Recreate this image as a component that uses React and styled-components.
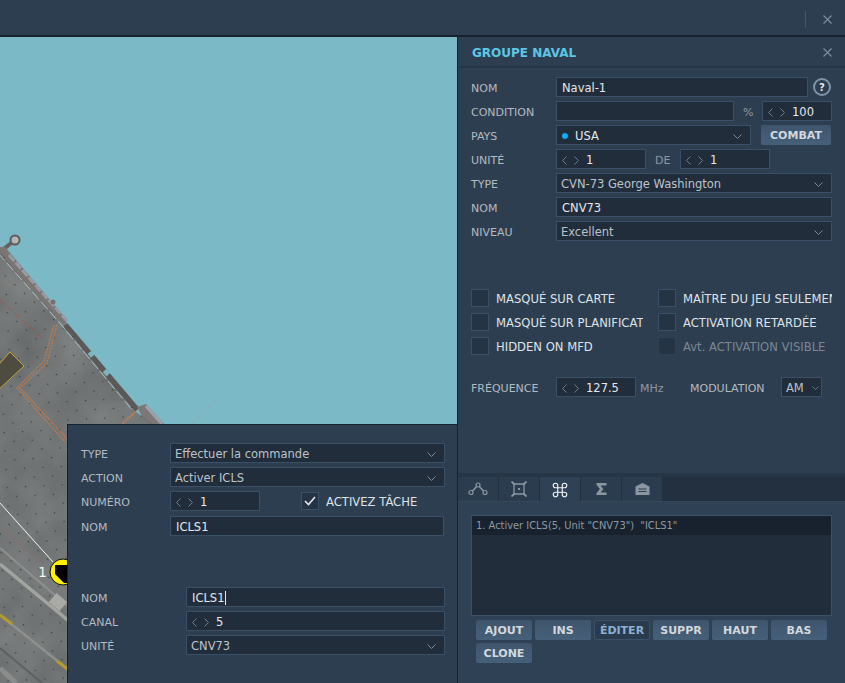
import React from "react";
import styled, { createGlobalStyle } from "styled-components";
import { Command } from "lucide-react";

const GlobalStyle = createGlobalStyle`
  html, body {
    margin: 0;
    padding: 0;
    background: #2d3e50;
  }
  * {
    box-sizing: border-box;
  }
`;

const Page = styled.div`
  width: 845px;
  height: 683px;
  overflow: hidden;
  display: flex;
  flex-direction: column;
  background: #2d3e50;
  font-family: "DejaVu Sans", sans-serif;
  font-size: 11px;
`;

const TopBar = styled.div`
  flex: none;
  height: 37px;
  display: flex;
  align-items: center;
  justify-content: flex-end;
  padding: 3px 13px 0 0;
  border-bottom: 2px solid #18222d;
`;

const TopDivider = styled.div`
  width: 1px;
  height: 17px;
  margin-right: 17px;
  background: #445669;
`;

const CloseIcon = styled.svg`
  display: block;
  width: 9px;
  height: 9px;
  stroke: #7f8f9f;
  stroke-width: 1.1;
  fill: none;
`;

const Body = styled.div`
  flex: 1;
  display: flex;
  min-height: 0;
`;

const MapArea = styled.div`
  position: relative;
  flex: none;
  width: 457px;
  height: 646px;
  overflow: hidden;
  background: #7cb9c7;
`;

const MapSvg = styled.svg`
  display: block;
  width: 457px;
  height: 646px;
`;

const TaskPanel = styled.div`
  position: absolute;
  left: 67px;
  top: 387px;
  right: 0;
  bottom: 0;
  padding: 18px 13px 0 13px;
  background: #2d3e50;
  border-left: 1px solid #18222d;
  border-top: 1px solid #18222d;
  display: flex;
  flex-direction: column;
  gap: 4px;
`;

const SidePanel = styled.div`
  flex: none;
  width: 388px;
  display: flex;
  flex-direction: column;
  border-left: 1px solid #18222d;
`;

const PanelHeader = styled.div`
  flex: none;
  height: 31px;
  display: flex;
  align-items: center;
  justify-content: space-between;
  padding: 2px 13px 0 14px;
  border-bottom: 2px solid #263544;
`;

const Title = styled.div`
  font-size: 12px;
  font-weight: bold;
  color: #5cc6e6;
`;

const Form = styled.div`
  flex: none;
  height: 405px;
  padding: 9px 13px 0 13px;
  display: flex;
  flex-direction: column;
  gap: 4px;
`;

const Row = styled.div`
  display: flex;
  align-items: center;
  height: 20px;
  margin-top: ${(p) => p.$top || 0}px;
`;

const Label = styled.div`
  flex: none;
  width: ${(p) => p.$w || 85}px;
  padding-top: 2px;
  color: #b3bac1;
  white-space: nowrap;
`;

const InlineLabel = styled.div`
  flex: none;
  width: ${(p) => p.$w}px;
  padding: 2px 0 0 ${(p) => p.$pad || 0}px;
  color: ${(p) => p.$color || "#8d98a3"};
  white-space: nowrap;
`;

const Field = styled.div`
  flex: none;
  width: ${(p) => p.$w}px;
  height: 20px;
  display: flex;
  align-items: center;
  padding: 2px 8px 0 5px;
  background: #212d3b;
  border: 1px solid #3a5068;
  color: #e4e8ec;
  font-size: 11.5px;
  white-space: nowrap;
  overflow: hidden;
`;

const TextField = styled(Field)`
  padding-left: 5px;
`;

const Caret = styled.span`
  width: 1px;
  height: 14px;
  margin-left: 1px;
  background: #e4e8ec;
`;

const SelectField = styled(Field)`
  justify-content: space-between;
  padding-left: 4px;
  padding-right: ${(p) => p.$right || 8}px;
  color: #bcc3ca;
`;

const CountryDot = styled.span`
  width: 6px;
  height: 6px;
  margin: 0 7px 0 1px;
  border-radius: 50%;
  background: #0fa9f5;
`;

const SelectValue = styled.span`
  display: flex;
  align-items: center;
  color: ${(p) => p.$color || "inherit"};
`;

const SmallIcon = styled.svg`
  display: block;
  flex: none;
  fill: none;
  stroke: ${(p) => p.$color || "#7e8b98"};
  stroke-width: ${(p) => p.$stroke || 1};
`;

const SpinArrows = styled.span`
  flex: none;
  width: 24px;
  display: flex;
  gap: 7px;
`;

const HelpButton = styled.div`
  flex: none;
  width: 18px;
  height: 18px;
  margin-left: 5px;
  border: 2px solid #7f95aa;
  border-radius: 50%;
  display: flex;
  align-items: center;
  justify-content: center;
  color: #e4e8ec;
  font-size: 10px;
  font-weight: bold;
`;

const Button = styled.div`
  flex: none;
  width: ${(p) => p.$w || 56}px;
  height: 20px;
  margin-left: ${(p) => p.$left || 0}px;
  display: flex;
  align-items: center;
  justify-content: center;
  border-radius: 2px;
  font-size: 11px;
  font-weight: bold;
  color: ${(p) => (p.$ghost ? "#8db0d2" : "#d3d8dd")};
  background: ${(p) =>
    p.$ghost ? "#2a3b4e" : "linear-gradient(#3f556d, #466079)"};
  border: ${(p) => (p.$ghost ? "1px solid #3c5269" : "none")};
`;

const CheckGrid = styled.div`
  margin-top: 44px;
  display: grid;
  grid-template-columns: 187px 174px;
  grid-auto-rows: 18px;
  row-gap: 6px;
`;

const CheckItem = styled.div`
  display: flex;
  align-items: center;
  height: 18px;
  min-width: 0;
  margin-left: ${(p) => p.$left || 0}px;
`;

const CheckBox = styled.div`
  flex: none;
  width: 18px;
  height: 18px;
  display: flex;
  align-items: center;
  justify-content: center;
  background: #253445;
  border: 1px solid ${(p) => (p.$off ? "#2f4154" : "#3a5068")};
`;

const CheckText = styled.div`
  margin-left: 7px;
  padding-top: 2px;
  max-width: ${(p) => p.$max || 149}px;
  overflow: hidden;
  white-space: nowrap;
  font-size: 11.6px;
  color: ${(p) => (p.$off ? "#7b8793" : "#dfe3e7")};
`;

const TabStrip = styled.div`
  flex: none;
  height: 29px;
  padding-top: 4px;
  display: flex;
  gap: 1px;
  align-items: flex-start;
  background: linear-gradient(#263646 0, #263646 4px, #223040 4px);
  border-bottom: 1px solid #34485c;
`;

const Tab = styled.div`
  flex: none;
  width: 40px;
  height: ${(p) => (p.$active ? 25 : 24)}px;
  display: flex;
  align-items: center;
  justify-content: center;
  background: ${(p) => (p.$active ? "#2f4155" : "#2b3c4e")};
  color: ${(p) => (p.$active ? "#f2f4f6" : "#8b96a1")};
`;

const TabBody = styled.div`
  flex: 1;
  padding: 13px 13px 0 13px;
  background: #2f4155;
`;

const ListBox = styled.div`
  height: 101px;
  background: #212d3b;
  border: 1px solid #3a5068;
`;

const ListItem = styled.div`
  height: 19px;
  display: flex;
  align-items: center;
  padding-left: 4px;
  background: #18222e;
  color: #8f99a3;
  font-size: 9.9px;
  white-space: pre;
`;

const ButtonWrap = styled.div`
  width: 355px;
  margin: 4px 0 0 5px;
  display: flex;
  flex-wrap: wrap;
  gap: 3px;
`;

const Close = () => (
  <CloseIcon viewBox="0 0 9 9">
    <path d="M0.5 0.5 8.5 8.5M8.5 0.5 0.5 8.5" />
  </CloseIcon>
);

const Chevron = ({ w = 9 }) => (
  <SmallIcon width={w} height={(w + 1) / 2} viewBox="0 0 9 5">
    <path d="M0.5 0.5 4.5 4.5 8.5 0.5" />
  </SmallIcon>
);

const Select = ({ w, right, chevron, children }) => (
  <SelectField $w={w} $right={right}>
    <SelectValue>{children}</SelectValue>
    <Chevron w={chevron} />
  </SelectField>
);

const Spinner = ({ w, value }) => (
  <Field $w={w}>
    <SpinArrows>
      <SmallIcon width="5" height="9" viewBox="0 0 5 9" $color="#6f7c89">
        <path d="M4.5 0.5 0.5 4.5 4.5 8.5" />
      </SmallIcon>
      <SmallIcon width="5" height="9" viewBox="0 0 5 9" $color="#6f7c89">
        <path d="M0.5 0.5 4.5 4.5 0.5 8.5" />
      </SmallIcon>
    </SpinArrows>
    {value}
  </Field>
);

const CarrierDeck = () => (
  <MapSvg viewBox="0 37 457 646">
    <defs>
      <filter id="grain" x="0" y="0" width="100%" height="100%" colorInterpolationFilters="sRGB">
        <feTurbulence type="fractalNoise" baseFrequency="0.02" numOctaves="3" seed="7" />
        <feColorMatrix values="0 0 0 0 0.3  0 0 0 0 0.31  0 0 0 0 0.31  0.7 0.7 0 0 -0.4" />
      </filter>
      <pattern id="tiedowns" width="13" height="13" patternUnits="userSpaceOnUse" patternTransform="rotate(42)">
        <rect x="6" y="6" width="1.2" height="1.2" fill="#34363a" />
      </pattern>
      <clipPath id="deckClip">
        <polygon points="0,252 65,326 137,412 160,430 160,683 0,683" />
      </clipPath>
    </defs>

    {/* antenna + crane arm over the water */}
    <path d="M190 425 218 398" stroke="#93a9ae" strokeWidth="1" strokeDasharray="6 2" />
    <path d="M0 252 15 240" stroke="#66605e" strokeWidth="4" />
    <circle cx="15" cy="240" r="4.5" fill="#b5b6ba" stroke="#5f5b5a" strokeWidth="2" />

    {/* deck edge */}
    <polygon points="0,247 5,247 67,320 65,327 0,256" fill="#7b7574" />
    <path d="M9 255 67 321" stroke="#949ca1" strokeWidth="3" strokeDasharray="8 2" />
    <circle cx="53" cy="302" r="2.5" fill="#737272" />
    <path d="M65 325 137 410" stroke="#5b5a58" strokeWidth="6" />
    <path d="M90 352 93 356M104 371 108 375" stroke="#7fb5c1" strokeWidth="6" />
    <polygon points="137,407 146,404 165,425 150,432" fill="#7d7877" />
    <path d="M146 406 162 424" stroke="#9ba3a8" strokeWidth="3" />

    <polygon points="0,255 60,322 135,411 160,432 160,683 0,683" fill="#7e8181" />
    <g clipPath="url(#deckClip)">
      <rect x="0" y="240" width="160" height="443" fill="#000" filter="url(#grain)" opacity="0.7" />
      <rect x="0" y="240" width="160" height="443" fill="url(#tiedowns)" />

      <path d="M0 250 60 318 135 408" stroke="#a9c0c6" strokeWidth="1" strokeDasharray="10 3" fill="none" transform="translate(-2 3)" />

      {/* taxi lines */}
      <path d="M57 325 47 363 20 388 68 440" stroke="#c47a4e" strokeWidth="1.2" strokeDasharray="2 1" fill="none" />
      <path d="M54 325 44 361 17 388 65 442" stroke="#c47a4e" strokeWidth="1.2" strokeDasharray="2 1" fill="none" />
      <path d="M135 412 118 428" stroke="#c47a4e" strokeWidth="2" strokeDasharray="2 1" fill="none" />
      <path d="M0 300 42 338" stroke="#a9504a" strokeWidth="1" strokeDasharray="6 4" fill="none" />

      {/* elevator */}
      <polygon points="-4,368 10,352 24,366 -4,392" fill="#4e4b40" stroke="#c4a033" strokeWidth="1" />

      {/* lower deck markings */}
      <path d="M0 527 44 564" stroke="#8b6d68" strokeWidth="1" />
      <path d="M0 548 70 608" stroke="#8e908e" strokeWidth="2" />
      <path d="M0 564 70 622" stroke="#a2a4a0" strokeWidth="3.5" />
      <rect x="51" y="596" width="14" height="12" fill="#a9a9a5" transform="rotate(40 58 602)" />
      <path d="M0 615 70 671" stroke="#8e908e" strokeWidth="2.5" />
      <path d="M0 615 12 624M57 661 70 671" stroke="#b79a2c" strokeWidth="3" />
      <path d="M0 648 42 683" stroke="#5f6161" strokeWidth="2" />
      <path d="M0 668 16 683" stroke="#8b8d8c" strokeWidth="5" />
    </g>

    {/* waypoint */}
    <path d="M0 503 53 562" stroke="#f4f4f4" strokeWidth="1" />
    <circle cx="63" cy="572" r="13" fill="#fff000" stroke="#111" strokeWidth="1" />
    <polygon points="55,565 70,565 70,583 64,583 55,574" fill="#000" />
    <text x="38" y="577" fill="#f4f4f4" fontSize="14" fontFamily="DejaVu Sans, sans-serif">1</text>
  </MapSvg>
);

const WaypointIcon = () => (
  <svg width="20" height="14" viewBox="0 0 20 14" fill="none" stroke="currentColor" strokeWidth="1.2">
    <circle cx="3" cy="10.5" r="2" />
    <circle cx="10" cy="3" r="2" />
    <circle cx="17" cy="10.5" r="2" />
    <path d="M4.5 9 8.6 4.4M11.4 4.4 15.5 9" strokeWidth="1.5" />
  </svg>
);

const ZoneIcon = () => (
  <svg width="16" height="16" viewBox="0 0 16 16" fill="none" stroke="currentColor" strokeWidth="1.3">
    <path d="M3 3H13V13H3Z" />
    <path d="M0.5 0.5 3.5 3.5M15.5 0.5 12.5 3.5M0.5 15.5 3.5 12.5M15.5 15.5 12.5 12.5" strokeWidth="1.8" />
    <rect x="7" y="7" width="2" height="2" fill="currentColor" stroke="none" />
  </svg>
);

const SumIcon = () => (
  <svg width="11" height="12" viewBox="0 0 11 12" fill="currentColor">
    <path d="M0.5 0H10.5V2.5H4.6L7.4 6 4.6 9.5H10.5V12H0.5V10.2L3.8 6 0.5 1.8Z" />
  </svg>
);

const HangarIcon = () => (
  <svg width="15" height="12" viewBox="0 0 15 12" fill="currentColor">
    <path d="M0.5 3.5 7.5 0 14.5 3.5V12H0.5Z" />
    <path d="M3.5 6H11.5M3.5 8.5H11.5" stroke="#2b3c4e" strokeWidth="1.2" />
  </svg>
);

function App() {
  return (
    <Page>
      <GlobalStyle />
      <TopBar>
        <TopDivider />
        <Close />
      </TopBar>
      <Body>
        <MapArea>
          <CarrierDeck />
          <TaskPanel>
            <Row>
              <Label $w={89}>TYPE</Label>
              <Select w={275}>Effectuer la commande</Select>
            </Row>
            <Row>
              <Label $w={89}>ACTION</Label>
              <Select w={275}>Activer ICLS</Select>
            </Row>
            <Row>
              <Label $w={89}>NUMÉRO</Label>
              <Spinner w={90} value="1" />
              <CheckItem $left={41}>
                <CheckBox>
                  <SmallIcon width="12" height="10" viewBox="0 0 12 10" $color="#e4e8ec" $stroke={1.6}>
                    <path d="M1 5 4.5 8.5 11 1" />
                  </SmallIcon>
                </CheckBox>
                <CheckText>ACTIVEZ TÂCHE</CheckText>
              </CheckItem>
            </Row>
            <Row $top={1}>
              <Label $w={89}>NOM</Label>
              <TextField $w={274}>ICLS1</TextField>
            </Row>
            <Row $top={47}>
              <Label $w={105}>NOM</Label>
              <TextField $w={259}>
                ICLS1
                <Caret />
              </TextField>
            </Row>
            <Row>
              <Label $w={105}>CANAL</Label>
              <Spinner w={259} value="5" />
            </Row>
            <Row>
              <Label $w={105}>UNITÉ</Label>
              <Select w={259}>CNV73</Select>
            </Row>
          </TaskPanel>
        </MapArea>

        <SidePanel>
          <PanelHeader>
            <Title>GROUPE NAVAL</Title>
            <Close />
          </PanelHeader>
          <Form>
            <Row>
              <Label>NOM</Label>
              <TextField $w={252}>Naval-1</TextField>
              <HelpButton>?</HelpButton>
            </Row>
            <Row>
              <Label>CONDITION</Label>
              <Field $w={178} />
              <InlineLabel $w={28} $pad={9}>%</InlineLabel>
              <Spinner w={70} value="100" />
            </Row>
            <Row>
              <Label>PAYS</Label>
              <Select w={195}>
                <CountryDot />
                <SelectValue $color="#e4e8ec">USA</SelectValue>
              </Select>
              <Button $w={70} $left={10}>COMBAT</Button>
            </Row>
            <Row>
              <Label>UNITÉ</Label>
              <Spinner w={90} value="1" />
              <InlineLabel $w={34} $pad={9}>DE</InlineLabel>
              <Spinner w={90} value="1" />
            </Row>
            <Row>
              <Label>TYPE</Label>
              <Select w={276}>CVN-73 George Washington</Select>
            </Row>
            <Row>
              <Label>NOM</Label>
              <TextField $w={276}>CNV73</TextField>
            </Row>
            <Row>
              <Label>NIVEAU</Label>
              <Select w={276}>Excellent</Select>
            </Row>

            <CheckGrid>
              <CheckItem>
                <CheckBox />
                <CheckText $max={147}>MASQUÉ SUR CARTE</CheckText>
              </CheckItem>
              <CheckItem>
                <CheckBox />
                <CheckText>MAÎTRE DU JEU SEULEMENT</CheckText>
              </CheckItem>
              <CheckItem>
                <CheckBox />
                <CheckText $max={147}>MASQUÉ SUR PLANIFICATEUR</CheckText>
              </CheckItem>
              <CheckItem>
                <CheckBox />
                <CheckText>ACTIVATION RETARDÉE</CheckText>
              </CheckItem>
              <CheckItem>
                <CheckBox />
                <CheckText $max={147}>HIDDEN ON MFD</CheckText>
              </CheckItem>
              <CheckItem>
                <CheckBox $off />
                <CheckText $off>Avt. ACTIVATION VISIBLE</CheckText>
              </CheckItem>
            </CheckGrid>

            <Row $top={18}>
              <Label>FRÉQUENCE</Label>
              <Spinner w={80} value="127.5" />
              <InlineLabel $w={54} $pad={4}>MHz</InlineLabel>
              <InlineLabel $w={91} $color="#b3bac1">MODULATION</InlineLabel>
              <Select w={41} right={2} chevron={7}>AM</Select>
            </Row>
          </Form>

          <TabStrip>
            <Tab><WaypointIcon /></Tab>
            <Tab><ZoneIcon /></Tab>
            <Tab $active><Command size={18} strokeWidth={1.5} /></Tab>
            <Tab><SumIcon /></Tab>
            <Tab><HangarIcon /></Tab>
          </TabStrip>
          <TabBody>
            <ListBox>
              <ListItem>{'1. Activer ICLS(5, Unit "CNV73")  "ICLS1"'}</ListItem>
            </ListBox>
            <ButtonWrap>
              <Button>AJOUT</Button>
              <Button>INS</Button>
              <Button $ghost>ÉDITER</Button>
              <Button>SUPPR</Button>
              <Button>HAUT</Button>
              <Button>BAS</Button>
              <Button>CLONE</Button>
            </ButtonWrap>
          </TabBody>
        </SidePanel>
      </Body>
    </Page>
  );
}

export default App;
